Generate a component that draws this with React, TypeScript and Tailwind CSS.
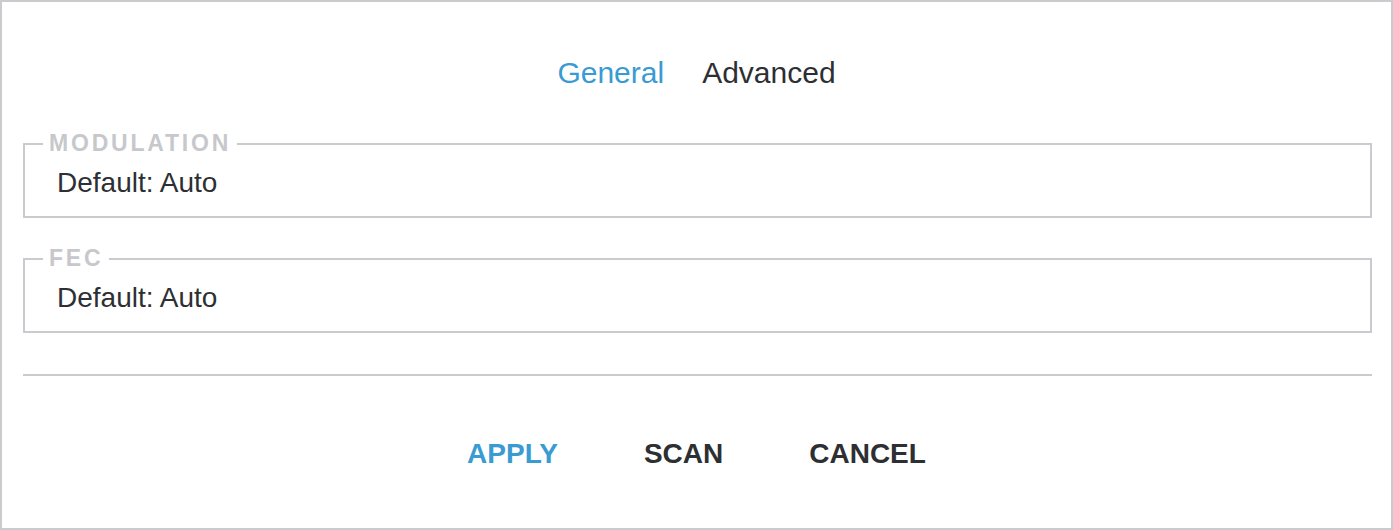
import { useState } from 'react';

const font = { fontFamily: '"Liberation Sans", Arial, sans-serif' };

function Field({ label, value }: { label: string; value: string }) {
  return (
    <fieldset className="border-2 border-[#c9cbcf] pb-[17px]">
      <legend className="ml-[18px] px-[6px] text-[23px] leading-none font-bold uppercase tracking-[2.8px] text-[#c6c8cc]">
        {label}
      </legend>
      <div className="mt-[12px] pl-[32px] text-[28px] leading-[32px] text-[#2d2f33]">{value}</div>
    </fieldset>
  );
}

export default function App() {
  const [tab, setTab] = useState<'general' | 'advanced'>('general');

  return (
    <div style={font} className="w-[1393px] h-[530px] bg-white border-2 border-[#c9cbcf] flex flex-col">
      <div className="flex justify-center gap-[38px] pt-[53px] text-[30px] leading-[36px]">
        <button
          onClick={() => setTab('general')}
          className={tab === 'general' ? 'text-[#3a9bd3]' : 'text-[#2d2f33]'}
        >
          General
        </button>
        <button
          onClick={() => setTab('advanced')}
          className={tab === 'advanced' ? 'text-[#3a9bd3]' : 'text-[#2d2f33]'}
        >
          Advanced
        </button>
      </div>

      <div className="pl-[21px] pr-[19px] mt-[41px] flex flex-col gap-[29px]">
        <Field label="Modulation" value="Default: Auto" />
        <Field label="FEC" value="Default: Auto" />
      </div>

      <div className="ml-[21px] mr-[19px] mt-[41px] border-t-2 border-[#c9cbcf]" />

      <div className="flex justify-center gap-[86px] mt-[62px] text-[28px] leading-[32px] font-bold">
        <button className="text-[#3a9bd3]">APPLY</button>
        <button className="text-[#2d2f33]">SCAN</button>
        <button className="text-[#2d2f33]">CANCEL</button>
      </div>
    </div>
  );
}
